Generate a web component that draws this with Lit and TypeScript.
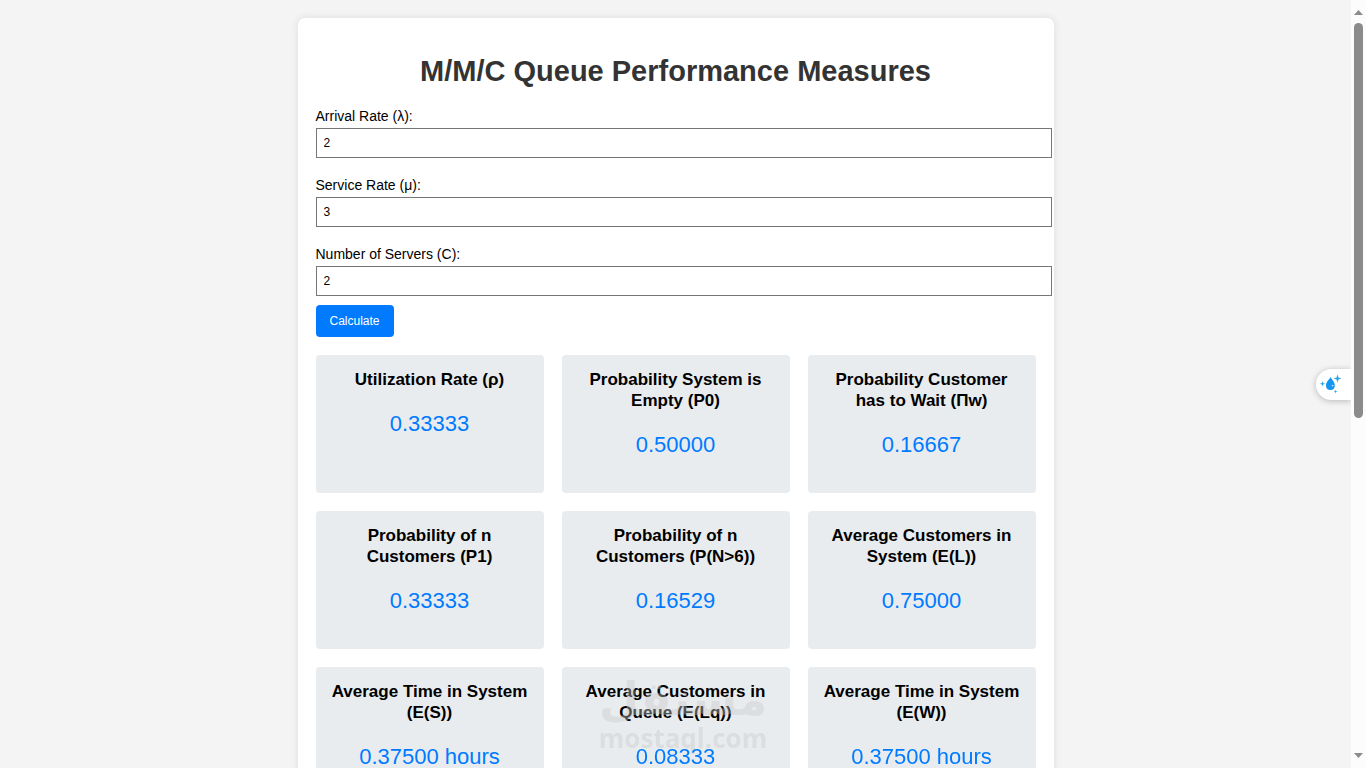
import { LitElement, html, css } from "lit";
import { customElement, state } from "lit/decorators.js";

interface Measure {
  title: string;
  value: string;
}

@customElement("app-root")
export class AppRoot extends LitElement {
  static styles = css`
    :host {
      display: flex;
      height: 100vh;
      overflow: hidden;
      background: #f4f4f4;
      color: #000;
      font-family: "Liberation Sans", Arial, sans-serif;
      font-size: 14px;
    }
    .view {
      flex: 1;
      min-width: 0;
      overflow: hidden;
      padding: 18px;
    }
    .container {
      max-width: 720px;
      margin: 0 auto;
      padding: 18px;
      background: #fff;
      border-radius: 7px;
      box-shadow: 0 0 9px rgba(0, 0, 0, 0.1);
    }
    h1 {
      margin: 18px 0 20px;
      color: #333;
      font-size: 29px;
      line-height: 34px;
      text-align: center;
    }
    form {
      display: flex;
      flex-direction: column;
      align-items: flex-start;
      margin-bottom: 18px;
    }
    .field {
      width: 100%;
      margin-bottom: 19px;
    }
    .field:last-of-type {
      margin-bottom: 9px;
    }
    label {
      display: block;
      margin-bottom: 4px;
      line-height: 16px;
    }
    input {
      box-sizing: content-box;
      width: 100%;
      height: 14px;
      margin: 0;
      padding: 7px;
      border: 1px solid #767676;
      border-radius: 0;
      background: #fff;
      color: #000;
      font: 12px/14px "Liberation Sans", Arial, sans-serif;
      display: block;
      outline: none;
    }
    .calculate {
      padding: 9px 14px;
      border: 0;
      border-radius: 4px;
      background: #007bff;
      color: #fff;
      font: 12px/14px "Liberation Sans", Arial, sans-serif;
      cursor: pointer;
    }
    .results {
      display: grid;
      grid-template-columns: repeat(3, minmax(0, 1fr));
      grid-auto-rows: minmax(138px, auto);
      gap: 18px;
    }
    .card {
      box-sizing: border-box;
      padding: 14px;
      border-radius: 4px;
      background: #e9ecef;
      text-align: center;
    }
    h3 {
      margin: 0 0 21px;
      font-size: 17px;
      line-height: 21px;
    }
    .value {
      margin: 0;
      color: #007bff;
      font-size: 22px;
      line-height: 26px;
      position: relative;
      z-index: 2;
    }
    .watermark {
      position: fixed;
      z-index: 1;
      left: 50%;
      bottom: 15px;
      transform: translateX(-50%);
      display: flex;
      flex-direction: column;
      align-items: center;
      color: rgb(200, 200, 200);
      opacity: 0.4;
      font-weight: 700;
      pointer-events: none;
    }
    .brand {
      font-family: "DejaVu Sans", sans-serif;
      font-size: 46px;
      line-height: 48px;
    }
    .domain {
      font-family: "Open Sans", sans-serif;
      font-size: 26px;
      line-height: 30px;
    }
    .helper {
      position: fixed;
      top: 369px;
      right: 15px;
      width: 35px;
      height: 31px;
      padding: 0;
      border: 0;
      border-radius: 16px 0 0 16px;
      background: #fff;
      box-shadow: 0 1px 6px rgba(0, 0, 0, 0.25);
      clip-path: inset(-10px 0 -10px -10px);
    }
    .helper svg {
      display: block;
    }
    .scrollbar {
      display: flex;
      flex-direction: column;
      align-items: center;
      width: 15px;
      background: #fcfcfc;
      position: relative;
    }
    .arrow {
      width: 15px;
      height: 23px;
      flex: none;
      fill: #8b8b8b;
    }
    .track {
      display: flex;
      flex-direction: column;
      flex: 1;
      width: 9px;
    }
    .thumb {
      flex: 395;
      border-radius: 5px;
      background: #8b8b8b;
    }
    .rest {
      flex: 327;
    }
  `;

  @state() private measures: Measure[] = [
    { title: "Utilization Rate (ρ)", value: "0.33333" },
    { title: "Probability System is Empty (P0)", value: "0.50000" },
    { title: "Probability Customer has to Wait (Πw)", value: "0.16667" },
    { title: "Probability of n Customers (P1)", value: "0.33333" },
    { title: "Probability of n Customers (P(N>6))", value: "0.16529" },
    { title: "Average Customers in System (E(L))", value: "0.75000" },
    { title: "Average Time in System (E(S))", value: "0.37500 hours" },
    { title: "Average Customers in Queue (E(Lq))", value: "0.08333" },
    { title: "Average Time in System (E(W))", value: "0.37500 hours" },
  ];

  private field(id: string, label: string, value: string) {
    return html`<div class="field">
      <label for=${id}>${label}</label>
      <input id=${id} type="text" inputmode="decimal" .value=${value} />
    </div>`;
  }

  render() {
    return html`
      <div class="view">
        <main class="container">
          <h1>M/M/C Queue Performance Measures</h1>
          <form @submit=${(e: Event) => e.preventDefault()}>
            ${this.field("arrival", "Arrival Rate (λ):", "2")}
            ${this.field("service", "Service Rate (μ):", "3")}
            ${this.field("servers", "Number of Servers (C):", "2")}
            <button class="calculate" type="submit">Calculate</button>
          </form>
          <section class="results">
            ${this.measures.map(
              (m) => html`<article class="card">
                <h3>${m.title}</h3>
                <p class="value">${m.value}</p>
              </article>`
            )}
          </section>
        </main>
      </div>
      <div class="scrollbar" aria-hidden="true">
        <svg class="arrow" viewBox="0 0 15 23"><path d="M3 15 L7.5 10 L12 15Z" /></svg>
        <div class="track"><div class="thumb"></div><div class="rest"></div></div>
        <svg class="arrow" viewBox="0 0 15 23"><path d="M3 8 L7.5 13 L12 8Z" /></svg>
      </div>
      <button class="helper" type="button" aria-label="Assistant">
        <svg width="35" height="31" viewBox="0 0 35 31">
          <path d="M14.5 8 C15.5 10.3 18.8 12.8 18.8 16.4 C18.8 19.4 17 21 14.4 21 C11.8 21 10 19.4 10 16.4 C10 12.8 13.4 10.6 14.5 8Z" fill="#1296f3" />
          <circle cx="16.6" cy="16.6" r="0.9" fill="#b8e2ff" />
          <path d="M21.5 5.6 L22.5 8.5 L25.4 9.5 L22.5 10.5 L21.5 13.4 L20.5 10.5 L17.6 9.5 L20.5 8.5Z" fill="#27a9ee" />
          <path d="M6.5 12.2 L7.2 14 L9 14.7 L7.2 15.4 L6.5 17.2 L5.8 15.4 L4 14.7 L5.8 14Z" fill="#27a9ee" />
          <path d="M19.6 20.8 L20.1 22.1 L21.4 22.6 L20.1 23.1 L19.6 24.4 L19.1 23.1 L17.8 22.6 L19.1 22.1Z" fill="#27a9ee" />
        </svg>
      </button>
      <div class="watermark" aria-hidden="true">
        <span class="brand" lang="ar">مستقل</span>
        <span class="domain">mostaql.com</span>
      </div>
    `;
  }
}
